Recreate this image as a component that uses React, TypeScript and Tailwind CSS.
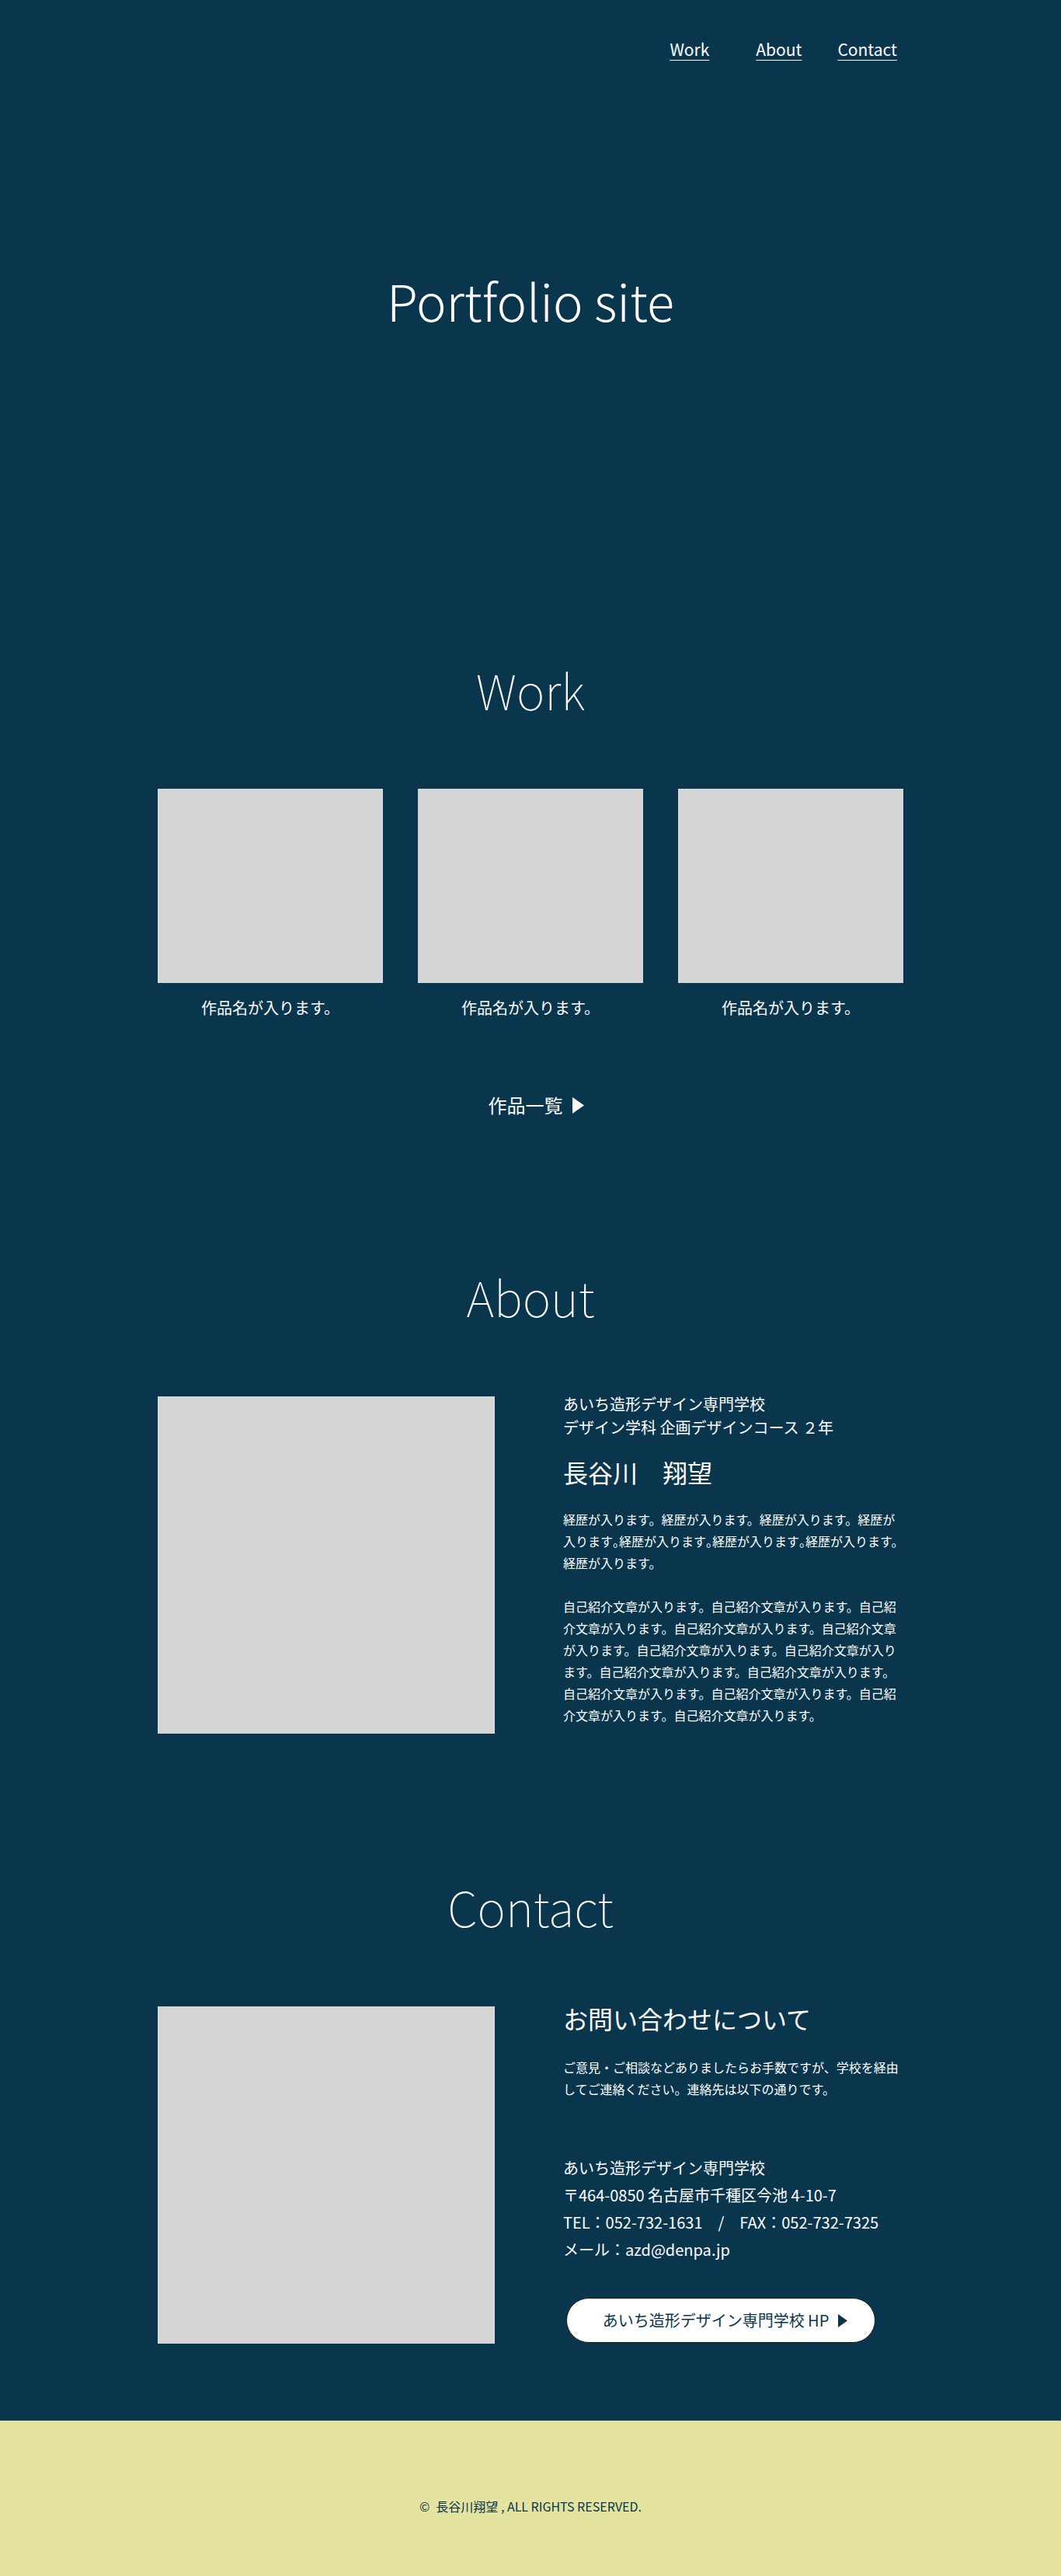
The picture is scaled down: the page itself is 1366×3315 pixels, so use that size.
import React from 'react';

const Triangle: React.FC<{ className?: string }> = ({ className }) => (
  <svg viewBox="0 0 15 21" className={className} fill="currentColor">
    <polygon points="0,0 15,10.5 0,21" />
  </svg>
);

const works = ['作品名が入ります。', '作品名が入ります。', '作品名が入ります。'];

// half-width full stop, as in the mock-up's second line
const Dot: React.FC = () => <span className="tracking-[-8px]">。</span>;

const App: React.FC = () => {
  return (
    <div className="font-['Noto_Sans_CJK_JP','Noto_Sans',sans-serif] w-full">
      <div className="bg-[#09354d] text-white pb-[99px]">
        <header className="w-[960px] mx-auto flex justify-end pt-[45px] pr-2 text-[21px] leading-[36px]">
          <a href="#work" className="underline underline-offset-[5px] decoration-1">Work</a>
          <a href="#about" className="ml-[60px] underline underline-offset-[5px] decoration-1">About</a>
          <a href="#contact" className="ml-[46px] underline underline-offset-[5px] decoration-1">Contact</a>
        </header>

        <h1 className="mt-[265px] text-center text-[65px] leading-[80px] font-light">Portfolio site</h1>

        <section id="work" className="w-[960px] mx-auto">
          <h2 className="mt-[421px] text-center text-[62px] leading-[80px] font-thin">Work</h2>
          <div className="mt-[88px] grid grid-cols-3 gap-[45px]">
            {works.map((w, i) => (
              <div key={i}>
                <div className="h-[250px] bg-[#d6d6d6]" />
                <p className="mt-[18px] text-center text-[20px] leading-[28px]">{w}</p>
              </div>
            ))}
          </div>
          <a href="#" className="mt-[95px] pl-[14px] flex items-center justify-center gap-3 text-[24px] leading-[32px]">
            作品一覧
            <Triangle className="w-[15px] h-[21px]" />
          </a>
        </section>

        <section id="about" className="w-[960px] mx-auto">
          <h2 className="mt-[190px] text-center text-[62px] leading-[80px] font-thin">About</h2>
          <div className="mt-[84px] flex gap-[88px]">
            <div className="mt-[5px] w-[434px] h-[434px] shrink-0 bg-[#d6d6d6]" />
            <div className="flex-1">
              <p className="text-[20px] leading-[30px]">
                あいち造形デザイン専門学校
                <br />
                デザイン学科 企画デザインコース ２年
              </p>
              <p className="mt-[22px] text-[32px] leading-[40px]">長谷川　翔望</p>
              <p className="mt-[27px] text-[16px] leading-[28px] whitespace-nowrap">
                経歴が入ります。経歴が入ります。経歴が入ります。経歴が
                <br />
                入ります<Dot />経歴が入ります<Dot />経歴が入ります<Dot />経歴が入ります。
                <br />
                経歴が入ります。
              </p>
              <p className="mt-[28px] text-[16px] leading-[28px]">
                自己紹介文章が入ります。自己紹介文章が入ります。自己紹介文章が入ります。自己紹介文章が入ります。自己紹介文章が入ります。自己紹介文章が入ります。自己紹介文章が入ります。自己紹介文章が入ります。自己紹介文章が入ります。自己紹介文章が入ります。自己紹介文章が入ります。自己紹介文章が入ります。自己紹介文章が入ります。
              </p>
            </div>
          </div>
        </section>

        <section id="contact" className="w-[960px] mx-auto">
          <h2 className="mt-[182px] text-center text-[62px] leading-[80px] font-thin">Contact</h2>
          <div className="mt-[84px] flex gap-[88px]">
            <div className="mt-[5px] w-[434px] h-[434px] shrink-0 bg-[#d6d6d6]" />
            <div className="flex-1">
              <h3 className="text-[32px] leading-[40px]">お問い合わせについて</h3>
              <p className="mt-[29px] text-[16px] leading-[28px]">
                ご意見・ご相談などありましたらお手数ですが、学校を経由してご連絡ください。連絡先は以下の通りです。
              </p>
              <div className="mt-[70px] text-[20px] leading-[35px]">
                <p>あいち造形デザイン専門学校</p>
                <p>〒464-0850 名古屋市千種区今池 4-10-7</p>
                <p>TEL：052-732-1631　/　FAX：052-732-7325</p>
                <p>メール：azd@denpa.jp</p>
              </div>
              <a
                href="#"
                className="mt-[45px] ml-1 pl-[11px] flex items-center justify-center gap-3 w-[398px] h-[58px] rounded-full bg-white border border-[#1a1a1a] text-[#09354d] text-[20px]"
              >
                あいち造形デザイン専門学校 HP
                <Triangle className="w-[12px] h-[17px]" />
              </a>
            </div>
          </div>
        </section>
      </div>

      <footer className="h-[200px] bg-[#e4e39f] flex justify-center pt-[98px]">
        <p className="text-[16px] leading-[24px] text-[#09354d]">
          <span className="mr-2">©</span>長谷川翔望 , ALL RIGHTS RESERVED.
        </p>
      </footer>
    </div>
  );
};

export default App;
